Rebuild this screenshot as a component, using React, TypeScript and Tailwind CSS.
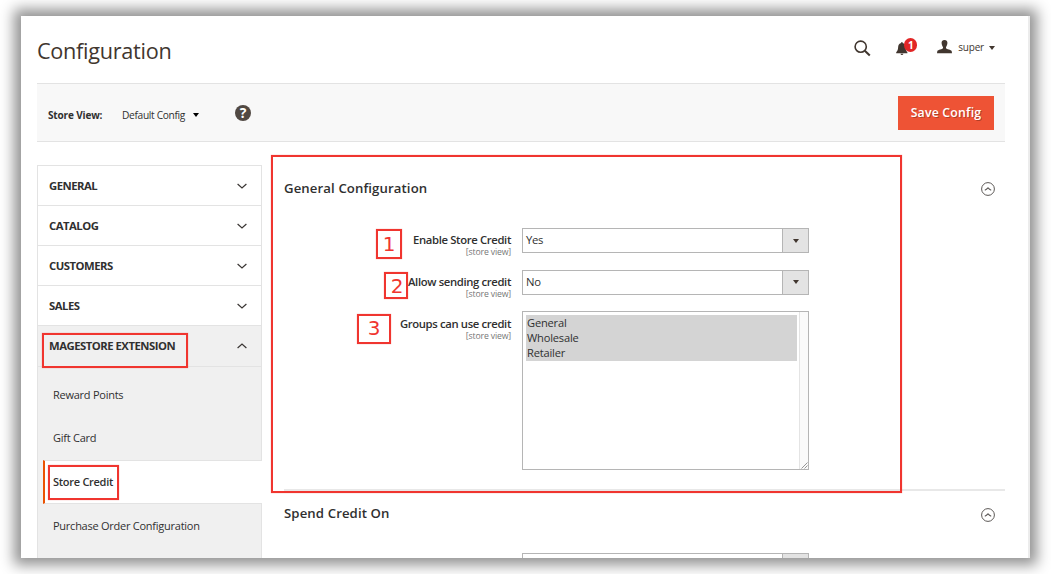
import React from "react";

const Chevron = ({ up = false }: { up?: boolean }) => (
  <svg width="10" height="6" viewBox="0 0 10 6" fill="none" stroke="#3a3634" strokeWidth="1.2">
    <path d={up ? "M0.6 5 L5 1 L9.4 5" : "M0.6 1 L5 5 L9.4 1"} />
  </svg>
);

const Caret = ({ className = "" }: { className?: string }) => (
  <svg width="6" height="4" viewBox="0 0 6 4" className={className} fill="currentColor">
    <path d="M0 0h6L3 4z" />
  </svg>
);

const CollapseIcon = () => (
  <svg width="14" height="14" viewBox="0 0 14 14" fill="none" stroke="#5c5856">
    <circle cx="7" cy="7" r="6.4" strokeWidth="1" />
    <path d="M3.8 8.2 Q5.5 7.6 7 5.9 Q8.5 7.6 10.2 8.2" strokeWidth="1.1" />
  </svg>
);

const NavGroup = ({ label, open = false }: { label: string; open?: boolean }) => (
  <div
    className={`flex items-center justify-between border-t border-[#e3e3e3] pl-[11px] pr-[14px] ${
      open ? "h-[41.2px] border-b bg-[#f0f0f0]" : "h-[40.1px] bg-white"
    }`}
  >
    <span className="-mt-[0.6px] text-[11.3px] font-bold leading-none tracking-[-0.49px] text-[#303030]">{label}</span>
    <Chevron up={open} />
  </div>
);

const NavItem = ({ label }: { label: string }) => (
  <div className="flex h-[43.2px] shrink-0 items-center border-r border-[#e3e3e3] pb-[1px] pl-[15px] text-[11px] leading-none tracking-[-0.25px] text-[#303030]">
    {label}
  </div>
);

const Field = ({ label, className, children }: { label: string; className: string; children: React.ReactNode }) => (
  <div className={`flex ${className}`}>
    <div className="flex w-[227px] shrink-0 flex-col items-end pt-[5.4px] text-right">
      <span className="whitespace-nowrap text-[11.3px] font-semibold leading-[14px] tracking-[-0.36px] text-[#303030]">{label}</span>
      <span className="pt-px text-[8.7px] leading-[9px] tracking-[-0.15px] text-[#777]">[store view]</span>
    </div>
    <div className="ml-[11px] w-[287px] shrink-0">{children}</div>
  </div>
);

const Select = ({ value }: { value: string }) => (
  <div className="flex h-[25px] border border-[#b5b5b5] bg-white">
    <span className="flex-1 pl-[3px] text-[11.3px] leading-[22px] tracking-[-0.3px] text-[#303030]">{value}</span>
    <span className="flex w-[26px] items-center justify-center border-l border-[#b5b5b5] bg-[#e3e3e3] text-[#41362f]">
      <Caret />
    </span>
  </div>
);

const Callout = ({ className, children }: { className: string; children?: React.ReactNode }) => (
  <div
    className={`absolute flex items-center justify-center border-2 border-[#f0352f] font-['DejaVu_Sans',sans-serif] text-[20px] leading-none text-[#f0352f] shadow-[0_0_1px_rgba(240,53,47,0.5)] ${className}`}
  >
    {children}
  </div>
);

export default function App() {
  return (
    <div className="h-[574px] w-[1051px] overflow-hidden bg-white pl-[21px] pt-[16px] font-['Open_Sans',sans-serif]">
      <div className="relative h-[542px] w-[1009px] shadow-[0_0_13px_7px_rgba(0,0,0,0.43)]">
        <div className="flex h-full flex-col overflow-hidden border-r-2 border-[#ececec] bg-white pl-[16px] pr-[23px]">
          <header className="flex h-[67px] shrink-0 items-start justify-between">
            <h1 className="pt-[19px] text-[21.7px] leading-[32px] tracking-[-0.3px] text-[#41362f]">Configuration</h1>
            <div className="flex items-start pr-[10px] pt-[24px] text-[#41362f]">
              <svg width="17" height="17" viewBox="0 0 17 17" fill="none" stroke="currentColor" className="mr-[25px]">
                <circle cx="6.7" cy="6.7" r="5.6" strokeWidth="1.6" />
                <path d="M10.8 10.8 L15.8 15.4" strokeWidth="2.1" />
              </svg>
              <div className="relative mr-[30px] h-[17px] w-[11px]">
                <svg width="12" height="14" viewBox="0 0 12 14" fill="currentColor" className="mt-[2px]">
                  <path d="M5.3 0h1.2v1.1C8.7 1.5 9.5 3.2 9.6 5.4c.1 2.2.6 3.6 1.8 4.8v1H.2v-1C1.4 9 2 7.6 2.1 5.4 2.2 3.2 3.1 1.5 5.3 1.1zM4.5 11.7h2.9Q7.2 13 5.9 13 4.7 13 4.5 11.7z" />
                </svg>
                <span className="absolute left-[8px] top-[-2px] flex h-[14px] w-[13px] items-center justify-center rounded-full bg-[#e22626] text-[10px] font-bold leading-none text-white">
                  1
                </span>
              </div>
              <svg width="15" height="14" viewBox="0 0 15 14" fill="currentColor">
                <path d="M7.5 0C5.3 0 4.4 1.4 4.6 3.2 4.8 5.2 5.5 6.2 6 7v1.3C5.4 9.3 1 9.6.3 11.2L0 13.3h15l-.3-2.1C14 9.6 9.6 9.3 9 8.3V7c.5-.8 1.2-1.8 1.4-3.8C10.6 1.4 9.7 0 7.5 0z" />
              </svg>
              <span className="ml-[6px] text-[10px] leading-[15px] tracking-[-0.2px]">super</span>
              <Caret className="ml-[5px] mt-[6px]" />
            </div>
          </header>

          <div className="flex h-[59px] shrink-0 items-center border-y border-[#e3e3e3] bg-[#f8f8f8] pl-[11px] pr-[11px]">
            <span className="w-[74px] whitespace-nowrap pt-[4px] text-[10px] font-bold leading-none tracking-[-0.15px] text-[#303030]">Store View:</span>
            <span className="flex items-center gap-[8px] whitespace-nowrap pt-[5px] text-[10.2px] leading-none tracking-[-0.33px] text-[#303030]">
              Default Config
              <Caret className="text-black" />
            </span>
            <span className="ml-[36px] mt-px flex size-[16px] items-center justify-center rounded-full bg-[#514943] text-[14px] font-bold leading-none text-white">
              ?
            </span>
            <button className="ml-auto h-[34px] w-[96px] bg-[#ee5335] pt-[2px] text-[12.3px] font-semibold leading-none tracking-[0.2px] text-white [text-shadow:1px_1px_0_rgba(0,0,0,0.25)]">
              Save Config
            </button>
          </div>

          <div className="flex min-h-0 flex-1">
            <nav className="mt-[23px] flex w-[225px] shrink-0 flex-col border-l border-[#e3e3e3] bg-[#f0f0f0]">
              <div className="border-r border-[#e3e3e3]">
                <NavGroup label="GENERAL" />
                <NavGroup label="CATALOG" />
                <NavGroup label="CUSTOMERS" />
                <NavGroup label="SALES" />
                <NavGroup label="MAGESTORE EXTENSION" open />
              </div>
              <div className="flex flex-col">
                <div className="h-[7px] border-r border-[#e3e3e3]" />
                <NavItem label="Reward Points" />
                <NavItem label="Gift Card" />
                <div className="ml-[5px] flex h-[44px] items-center border-y border-l-2 border-y-[#e3e3e3] border-l-[#eb5202] bg-white pb-px pl-[8px] text-[11px] font-semibold leading-none tracking-[-0.28px] text-[#303030]">
                  Store Credit
                </div>
                <NavItem label="Purchase Order Configuration" />
              </div>
              <div className="flex-1 border-r border-[#e3e3e3]" />
            </nav>

            <main className="ml-[22px] flex-1">
              <section className="h-[349px] border-b-2 border-[#e8e8e8]">
                <div className="flex h-[86px] items-start justify-between pr-[10px] pt-[36px]">
                  <h2 className="text-[13.2px] font-semibold leading-[20px] tracking-[0.1px] text-[#303030]">General Configuration</h2>
                  <span className="pt-[4px]"><CollapseIcon /></span>
                </div>
                <Field label="Enable Store Credit" className="h-[41.6px]">
                  <Select value="Yes" />
                </Field>
                <Field label="Allow sending credit" className="h-[41.6px]">
                  <Select value="No" />
                </Field>
                <Field label="Groups can use credit" className="h-[160px]">
                  <div className="flex h-[159px] border border-[#b5b5b5] bg-white text-[11.1px] leading-[15px] tracking-[-0.18px] text-[#303030]">
                    <ul className="ml-[3px] mt-[3px] h-[46px] w-[271px] bg-[#d4d4d4] pl-[1px]">
                      <li>General</li>
                      <li>Wholesale</li>
                      <li>Retailer</li>
                    </ul>
                    <div className="ml-auto flex w-[9px] items-end justify-end border-l border-[#e4e4e4] bg-[#fafafa]">
                      <svg width="7" height="7" viewBox="0 0 7 7" stroke="#8a8a8a" strokeWidth="0.9">
                        <path d="M0.5 6.5 L6.5 0.5 M3.5 6.5 L6.5 3.5" />
                      </svg>
                    </div>
                  </div>
                </Field>
              </section>
              <section>
                <div className="flex h-[62px] items-start justify-between pr-[10px] pt-[12px]">
                  <h2 className="text-[13.2px] font-semibold leading-[20px] tracking-[0.1px] text-[#303030]">Spend Credit On</h2>
                  <span className="pt-[5px]"><CollapseIcon /></span>
                </div>
                <div className="ml-[238px] w-[287px]">
                  <Select value="" />
                </div>
              </section>
            </main>
          </div>
        </div>

        <Callout className="left-[250px] top-[139px] h-[338px] w-[631px]" />
        <Callout className="left-[21px] top-[317px] h-[35px] w-[146px]" />
        <Callout className="left-[27px] top-[449px] h-[35px] w-[71px]" />
        <Callout className="left-[355px] top-[213px] h-[30px] w-[26px]">1</Callout>
        <Callout className="left-[363px] top-[256px] h-[27px] w-[24px] pl-[2px]">2</Callout>
        <Callout className="left-[336px] top-[298px] h-[30px] w-[34px] pb-[2px]">3</Callout>
      </div>
    </div>
  );
}
